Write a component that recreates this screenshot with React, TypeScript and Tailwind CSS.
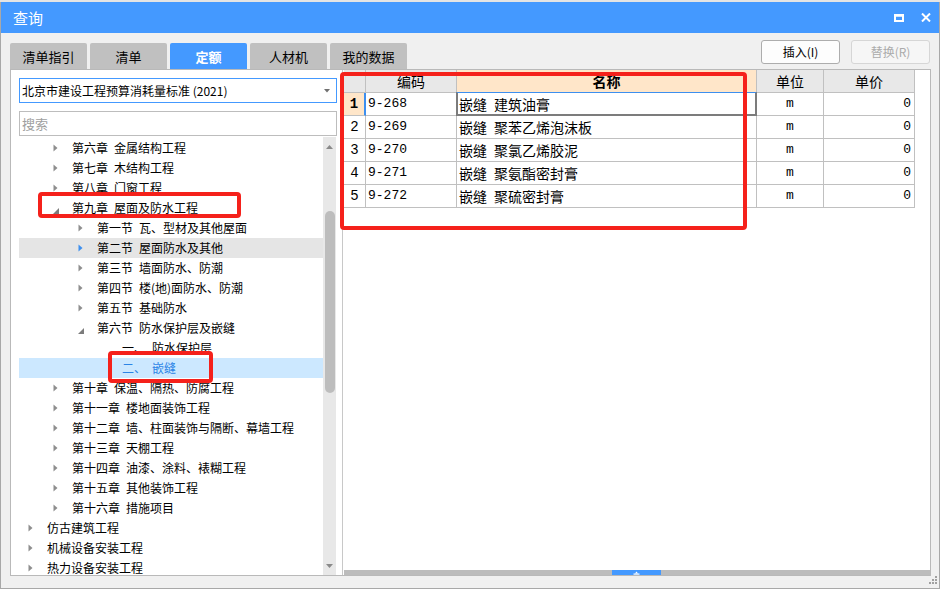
import React from 'react';

type Node = { l: 0 | 1 | 2 | 3; t: string; a?: 'r' | 'd'; hover?: boolean; sel?: boolean };

const tree: Node[] = [
  { l: 1, t: '第六章\u2002金属结构工程', a: 'r' },
  { l: 1, t: '第七章\u2002木结构工程', a: 'r' },
  { l: 1, t: '第八章\u2002门窗工程', a: 'r' },
  { l: 1, t: '第九章\u2002屋面及防水工程', a: 'd' },
  { l: 2, t: '第一节\u2002瓦、型材及其他屋面', a: 'r' },
  { l: 2, t: '第二节\u2002屋面防水及其他', a: 'r', hover: true },
  { l: 2, t: '第三节\u2002墙面防水、防潮', a: 'r' },
  { l: 2, t: '第四节\u2002楼(地)面防水、防潮', a: 'r' },
  { l: 2, t: '第五节\u2002基础防水', a: 'r' },
  { l: 2, t: '第六节\u2002防水保护层及嵌缝', a: 'd' },
  { l: 3, t: '一、\u2002防水保护层' },
  { l: 3, t: '二、\u2002嵌缝', sel: true },
  { l: 1, t: '第十章\u2002保温、隔热、防腐工程', a: 'r' },
  { l: 1, t: '第十一章\u2002楼地面装饰工程', a: 'r' },
  { l: 1, t: '第十二章\u2002墙、柱面装饰与隔断、幕墙工程', a: 'r' },
  { l: 1, t: '第十三章\u2002天棚工程', a: 'r' },
  { l: 1, t: '第十四章\u2002油漆、涂料、裱糊工程', a: 'r' },
  { l: 1, t: '第十五章\u2002其他装饰工程', a: 'r' },
  { l: 1, t: '第十六章\u2002措施项目', a: 'r' },
  { l: 0, t: '仿古建筑工程', a: 'r' },
  { l: 0, t: '机械设备安装工程', a: 'r' },
  { l: 0, t: '热力设备安装工程', a: 'r' },
];

const indent: Record<number, string> = {
  0: 'pl-[9px]',
  1: 'pl-[34px]',
  2: 'pl-[59px]',
  3: 'pl-[84px]',
};

const rows = [
  ['9-268', '嵌缝\u2002建筑油膏'],
  ['9-269', '嵌缝\u2002聚苯乙烯泡沫板'],
  ['9-270', '嵌缝\u2002聚氯乙烯胶泥'],
  ['9-271', '嵌缝\u2002聚氨酯密封膏'],
  ['9-272', '嵌缝\u2002聚硫密封膏'],
];

const tabs = ['清单指引', '清单', '定额', '人材机', '我的数据'];

function RightArrow({ blue }: { blue?: boolean }) {
  return (
    <svg width="5" height="8" viewBox="0 0 5 8">
      <path d="M0.5 0.5 L4.5 4 L0.5 7.5 Z" fill={blue ? '#3d8fef' : '#8e8e8e'} />
    </svg>
  );
}

function ExpArrow() {
  return (
    <svg width="6" height="6" viewBox="0 0 6 6">
      <path d="M6 0 L6 6 L0 6 Z" fill="#7c7c7c" />
    </svg>
  );
}

function TreeRow({ n }: { n: Node }) {
  const bg = n.sel ? 'bg-[#cce8ff]' : n.hover ? 'bg-[#e5e5e5]' : '';
  const color = n.sel ? 'text-[#2b84e6]' : 'text-black';
  return (
    <div className={`h-[20px] flex items-center shrink-0 ${indent[n.l]} ${bg}`}>
      <div className="w-[19px] h-[20px] flex items-center shrink-0">
        {n.a === 'r' && <RightArrow blue={n.hover} />}
        {n.a === 'd' && (
          <div className="mt-[6px]">
            <ExpArrow />
          </div>
        )}
      </div>
      <span className={`text-[12px] leading-[20px] whitespace-nowrap ${color}`}>{n.t}</span>
    </div>
  );
}

export default function App() {
  return (
    <div className="w-[940px] h-[589px] relative overflow-hidden bg-[#f0f0f0] font-['Noto_Sans_CJK_SC','Noto_Sans',sans-serif]">
      <div className="h-[2px] bg-[#e4e4e4]" />
      <div className="h-[587px] border-l border-r border-b border-[#a8a8a8] flex flex-col">
        {/* Title bar */}
        <div className="h-[31px] bg-[#4499ff] flex items-center pl-[12px] pr-[8px] shrink-0">
          <span className="text-white text-[15px] leading-none">查询</span>
          <div className="ml-auto flex items-center gap-[17px]">
            <svg width="10" height="8" viewBox="0 0 10 8">
              <rect x="1" y="1.5" width="8" height="5.5" fill="none" stroke="#fff" strokeWidth="2" />
              <rect x="0" y="0" width="10" height="2.5" fill="#fff" />
            </svg>
            <svg width="10" height="9" viewBox="0 0 10 9">
              <path d="M1 0.5 L9 8.5 M9 0.5 L1 8.5" stroke="#fff" strokeWidth="2" />
            </svg>
          </div>
        </div>

        {/* Tabs row */}
        <div className="h-[36px] flex items-end pl-[9px] shrink-0">
          <div className="flex gap-[3px]">
            {tabs.map((t) => (
              <div
                key={t}
                className={`w-[77px] h-[26px] rounded-t-[2px] flex items-center justify-center text-[13px] leading-none ${
                  t === '定额' ? 'bg-[#4499ff] text-white font-bold' : 'bg-[#c0c0c0] text-black'
                }`}
              >
                {t}
              </div>
            ))}
          </div>
          <div className="ml-auto self-start mt-[7px] mr-[9px] flex gap-[11px]">
            <div className="w-[79px] h-[24px] rounded-[3px] border border-[#adadad] bg-[#fdfdfd] flex items-center justify-center text-[12px] text-black">
              插入(I)
            </div>
            <div className="w-[79px] h-[24px] rounded-[3px] border border-[#d6d6d6] bg-[#f6f6f6] flex items-center justify-center text-[12px] text-[#ababab]">
              替换(R)
            </div>
          </div>
        </div>

        {/* Main */}
        <div className="ml-[9px] w-[921px] h-[507px] bg-white border border-[#b9b9b9] flex shrink-0">
          {/* Left panel */}
          <div className="w-[332px] h-full border-r border-[#c8c8c8] pl-[8px] flex flex-col">
            <div className="mt-[8px] w-[318px] h-[25px] border border-[#4499ff] flex items-center pl-[2px] pr-[6px]">
              <span className="text-[12px] text-black leading-none whitespace-nowrap">
                北京市建设工程预算消耗量标准 (2021)
              </span>
              <svg className="ml-auto" width="6" height="4" viewBox="0 0 6 4">
                <path d="M0 0 L6 0 L3 3.5 Z" fill="#707070" />
              </svg>
            </div>
            <div className="mt-[8px] w-[318px] h-[25px] border border-[#bdbdbd] flex items-center pl-[2px]">
              <span className="text-[13px] text-[#a0a0a0] leading-none">搜索</span>
            </div>
            <div className="mt-[1px] flex-1 flex w-[317px] overflow-hidden">
              <div className="w-[304px] pt-[1px] flex flex-col overflow-hidden">
                {tree.map((n, i) => (
                  <TreeRow key={i} n={n} />
                ))}
              </div>
              <div className="w-[13px] bg-[#e8e8e8] flex flex-col items-center">
                <div className="h-[12px] flex items-end">
                  <svg width="7" height="4" viewBox="0 0 7 4">
                    <path d="M0 4 L7 4 L3.5 0 Z" fill="#8a8a8a" />
                  </svg>
                </div>
                <div className="mt-[62px] w-[10px] h-[182px] rounded-full bg-[#bdbdbd]" />
                <div className="flex-1" />
                <div className="h-[8px] mb-[3px]">
                  <svg width="7" height="4" viewBox="0 0 7 4">
                    <path d="M0 0 L7 0 L3.5 4 Z" fill="#8a8a8a" />
                  </svg>
                </div>
              </div>
            </div>
          </div>

          {/* Right panel */}
          <div className="w-[587px] h-full pl-[1px] flex flex-col">
            <div className="flex flex-col w-[571px]">
              {/* header */}
              <div className="flex h-[23px] text-[14px] leading-none">
                <div className="w-[22px] h-full bg-[#e8e8e8] border-r border-b border-[#c0c0c0]" />
                <div className="w-[91px] h-full bg-[#e8e8e8] border-r border-b border-[#c0c0c0] flex items-center justify-center">
                  编码
                </div>
                <div className="w-[300px] h-full bg-[#ffe6c9] border-r border-b border-[#c0c0c0] flex items-center justify-center font-bold">
                  名称
                </div>
                <div className="w-[67px] h-full bg-[#e8e8e8] border-r border-b border-[#c0c0c0] flex items-center justify-center">
                  单位
                </div>
                <div className="w-[91px] h-full bg-[#e8e8e8] border-r border-b border-[#c0c0c0] flex items-center justify-center">
                  单价
                </div>
              </div>
              {rows.map((r, i) => (
                <div key={i} className="flex h-[23px]">
                  <div
                    className={`w-[22px] h-full border-b border-[#c0c0c0] flex items-center justify-center font-['Liberation_Mono',monospace] text-[14px] ${
                      i === 0 ? 'bg-[#ffe6c9] font-bold border-r-2 border-r-[#3d8fef]' : 'border-r'
                    }`}
                  >
                    {i + 1}
                  </div>
                  <div className="w-[91px] h-full border-r border-b border-[#c0c0c0] flex items-center pl-[2px] font-['Liberation_Mono',monospace] text-[13px]">
                    {r[0]}
                  </div>
                  <div className="w-[300px] h-full border-r border-b border-[#c0c0c0] flex items-center pl-[2px] text-[14px] relative">
                    {i === 0 && (
                      <div className="absolute left-[-1px] right-[-1px] top-[-1px] bottom-[-1px] border-l-2 border-r-2 border-b-2 border-[#7c7c7c] border-t border-t-[#3d8fef]" />
                    )}
                    <span className="leading-none whitespace-nowrap">{r[1]}</span>
                  </div>
                  <div className="w-[67px] h-full border-r border-b border-[#c0c0c0] flex items-center justify-center font-['Liberation_Mono',monospace] text-[13px]">
                    m
                  </div>
                  <div className="w-[91px] h-full border-r border-b border-[#c0c0c0] flex items-center justify-end pr-[3px] font-['Liberation_Mono',monospace] text-[13px]">
                    0
                  </div>
                </div>
              ))}
            </div>
            <div className="flex-1" />
            <div className="h-[5px] bg-[#bcbcbc] flex">
              <div className="ml-[268px] w-[49px] h-full bg-[#4499ff] flex items-center justify-center">
                <svg width="7" height="4" viewBox="0 0 7 4">
                  <path d="M2 2.5 L3.5 0.5 L5 2.5 Z" fill="#fff" />
                  <rect x="0.5" y="2.5" width="6" height="1.2" fill="#fff" />
                </svg>
              </div>
            </div>
          </div>
        </div>
      </div>

      {/* resize grip */}
      <svg className="absolute left-[929px] top-[576px]" width="9" height="9" viewBox="0 0 9 9">
        <rect x="6" y="0" width="2" height="2" fill="#a0a0a0" />
        <rect x="3" y="3" width="2" height="2" fill="#a0a0a0" />
        <rect x="6" y="3" width="2" height="2" fill="#a0a0a0" />
        <rect x="0" y="6" width="2" height="2" fill="#a0a0a0" />
        <rect x="3" y="6" width="2" height="2" fill="#a0a0a0" />
        <rect x="6" y="6" width="2" height="2" fill="#a0a0a0" />
      </svg>

      {/* red annotation boxes */}
      <div className="absolute left-[38px] top-[192px] w-[203px] h-[26px] border-[4px] border-[#f5211b] rounded-[4px]" />
      <div className="absolute left-[108px] top-[351px] w-[105px] h-[32px] border-[4px] border-[#f5211b] rounded-[4px]" />
      <div className="absolute left-[340px] top-[72px] w-[407px] h-[158px] border-[4px] border-[#f5211b] rounded-[4px]" />
    </div>
  );
}
